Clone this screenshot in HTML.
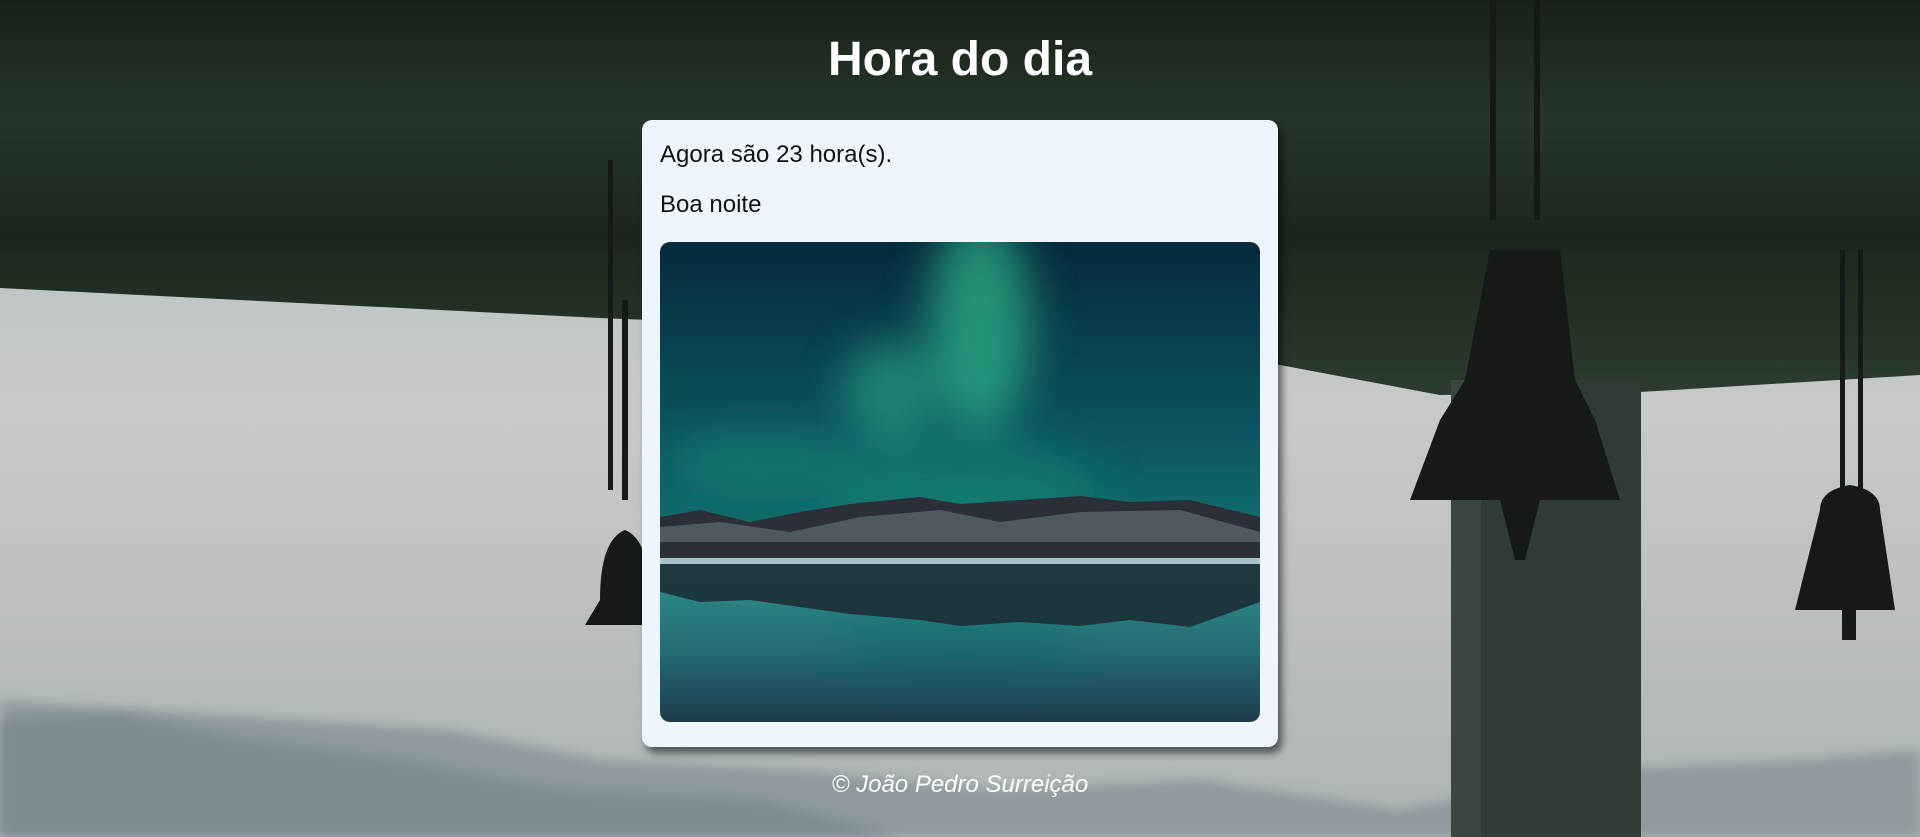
<!DOCTYPE html>
<html><head><meta charset="utf-8"><style>
html,body{margin:0;padding:0;width:1920px;height:837px;overflow:hidden;font-family:"Liberation Sans",Arial,sans-serif}
#bg{position:absolute;left:0;top:0}
h1{position:absolute;top:0;left:0;width:1920px;margin:0;text-align:center;color:#fff;font-size:48px;font-weight:bold;line-height:1;padding-top:36px}
.card{position:absolute;left:642px;top:120px;width:636px;height:627px;background:#eef5fd;border-radius:10px;box-shadow:4px 6px 8px rgba(0,0,0,.55)}
.card p{position:absolute;left:18px;margin:0;font-size:24px;color:#111;line-height:1}
.img{position:absolute;left:18px;top:122px;width:600px;height:480px;border-radius:10px;overflow:hidden}
.foot{position:absolute;top:771px;left:0;width:1920px;text-align:center;color:#fff;font-size:24px;font-style:italic}
</style></head><body>
<svg id="bg" width="1920" height="837" viewBox="0 0 1920 837">
<defs>
<linearGradient id="sky" x1="0" y1="0" x2="0" y2="1"><stop offset="0" stop-color="#b3bec2"/><stop offset=".5" stop-color="#c6cac7"/><stop offset="1" stop-color="#aeb4b4"/></linearGradient>
<linearGradient id="ceil" x1="0" y1="0" x2="0" y2="1"><stop offset="0" stop-color="#182219"/><stop offset=".3" stop-color="#26362a"/><stop offset=".6" stop-color="#1b271d"/><stop offset="1" stop-color="#2c3c2e"/></linearGradient>
<filter id="bl"><feGaussianBlur stdDeviation="6"/></filter>
<filter id="bl2"><feGaussianBlur stdDeviation="25"/></filter>
</defs>
<rect width="1920" height="837" fill="url(#sky)"/>
<path d="M0 700 L150 710 L300 720 L450 730 L600 760 L800 770 L1000 790 L1200 780 L1400 810 L1600 770 L1800 760 L1920 750 L1920 837 L0 837Z" fill="#8e9a9e" filter="url(#bl)"/>
<path d="M0 720 L120 715 L250 740 L400 760 L560 790 L760 800 L900 837 L0 837Z" fill="#7e8b91" filter="url(#bl)"/>
<path d="M0 0 H1920 V375 L1640 392 L1440 395 L1200 350 L900 330 L600 318 L0 288Z" fill="url(#ceil)"/>
<rect x="1451" y="380" width="190" height="457" fill="#2f3b33"/>
<rect x="1451" y="380" width="30" height="457" fill="#3a463e"/>
<g fill="#151a16">
<rect x="608" y="160" width="5" height="330"/><rect x="622" y="300" width="6" height="200"/>
<path d="M600 600 Q600 540 625 530 Q650 540 650 600 L660 625 L585 625Z"/>
<rect x="1490" y="0" width="6" height="220"/><rect x="1534" y="0" width="6" height="220"/>
<path d="M1490 250 L1560 250 L1575 380 L1595 420 L1620 500 L1410 500 L1440 420 L1465 380Z"/>
<path d="M1500 500 L1540 500 L1525 560 L1515 560Z"/>
<rect x="1840" y="250" width="5" height="250"/><rect x="1858" y="250" width="5" height="250"/>
<path d="M1820 510 Q1820 490 1850 485 Q1880 490 1880 510 L1895 610 L1795 610Z"/>
<rect x="1842" y="610" width="14" height="30"/>
</g>
</svg>
<h1>Hora do dia</h1>
<div class="card">
<p style="top:23px">Agora são 23 hora(s).</p>
<p style="top:73px">Boa noite</p>
<div class="img"><svg width="600" height="480" viewBox="0 0 600 480">
<defs>
<linearGradient id="sk" x1="0" y1="0" x2="0" y2="1"><stop offset="0" stop-color="#062a3c"/><stop offset=".6" stop-color="#0c5560"/><stop offset="1" stop-color="#127570"/></linearGradient>
<linearGradient id="wt" x1="0" y1="0" x2="0" y2="1"><stop offset="0" stop-color="#1a8c84"/><stop offset=".6" stop-color="#0c5a62"/><stop offset="1" stop-color="#05283a"/></linearGradient>
<filter id="ab"><feGaussianBlur stdDeviation="22"/></filter>
</defs>
<rect width="600" height="320" fill="url(#sk)"/>
<g filter="url(#ab)">
<ellipse cx="320" cy="80" rx="50" ry="110" fill="#2fb88c" opacity=".7"/>
<ellipse cx="230" cy="150" rx="45" ry="50" fill="#2fae88" opacity=".6"/>
<ellipse cx="100" cy="220" rx="90" ry="25" fill="#1f9a80" opacity=".5"/>
<ellipse cx="300" cy="250" rx="140" ry="50" fill="#1a8c78" opacity=".5"/>
<ellipse cx="300" cy="390" rx="120" ry="40" fill="#2aa888" opacity=".5"/>
</g>
<rect y="315" width="600" height="165" fill="url(#wt)" opacity=".9"/>
<path d="M0 275 L40 268 L90 280 L140 270 L190 262 L260 255 L300 262 L360 258 L420 254 L470 260 L530 258 L600 275 L600 318 L0 318Z" fill="#2a2f38"/>
<path d="M0 285 L60 280 L130 290 L200 275 L280 268 L340 280 L420 270 L520 268 L600 290 L600 300 L0 300Z" fill="#8a98a2" opacity=".4"/>
<rect y="316" width="600" height="6" fill="#a9c4c8"/>
<path d="M0 322 L600 322 L600 360 L530 385 L470 378 L420 384 L360 380 L300 384 L260 378 L190 372 L140 365 L90 358 L40 360 L0 350Z" fill="#1c2a32" opacity=".85"/>
</svg></div>
</div>
<div class="foot">© João Pedro Surreição</div>
</body></html>
